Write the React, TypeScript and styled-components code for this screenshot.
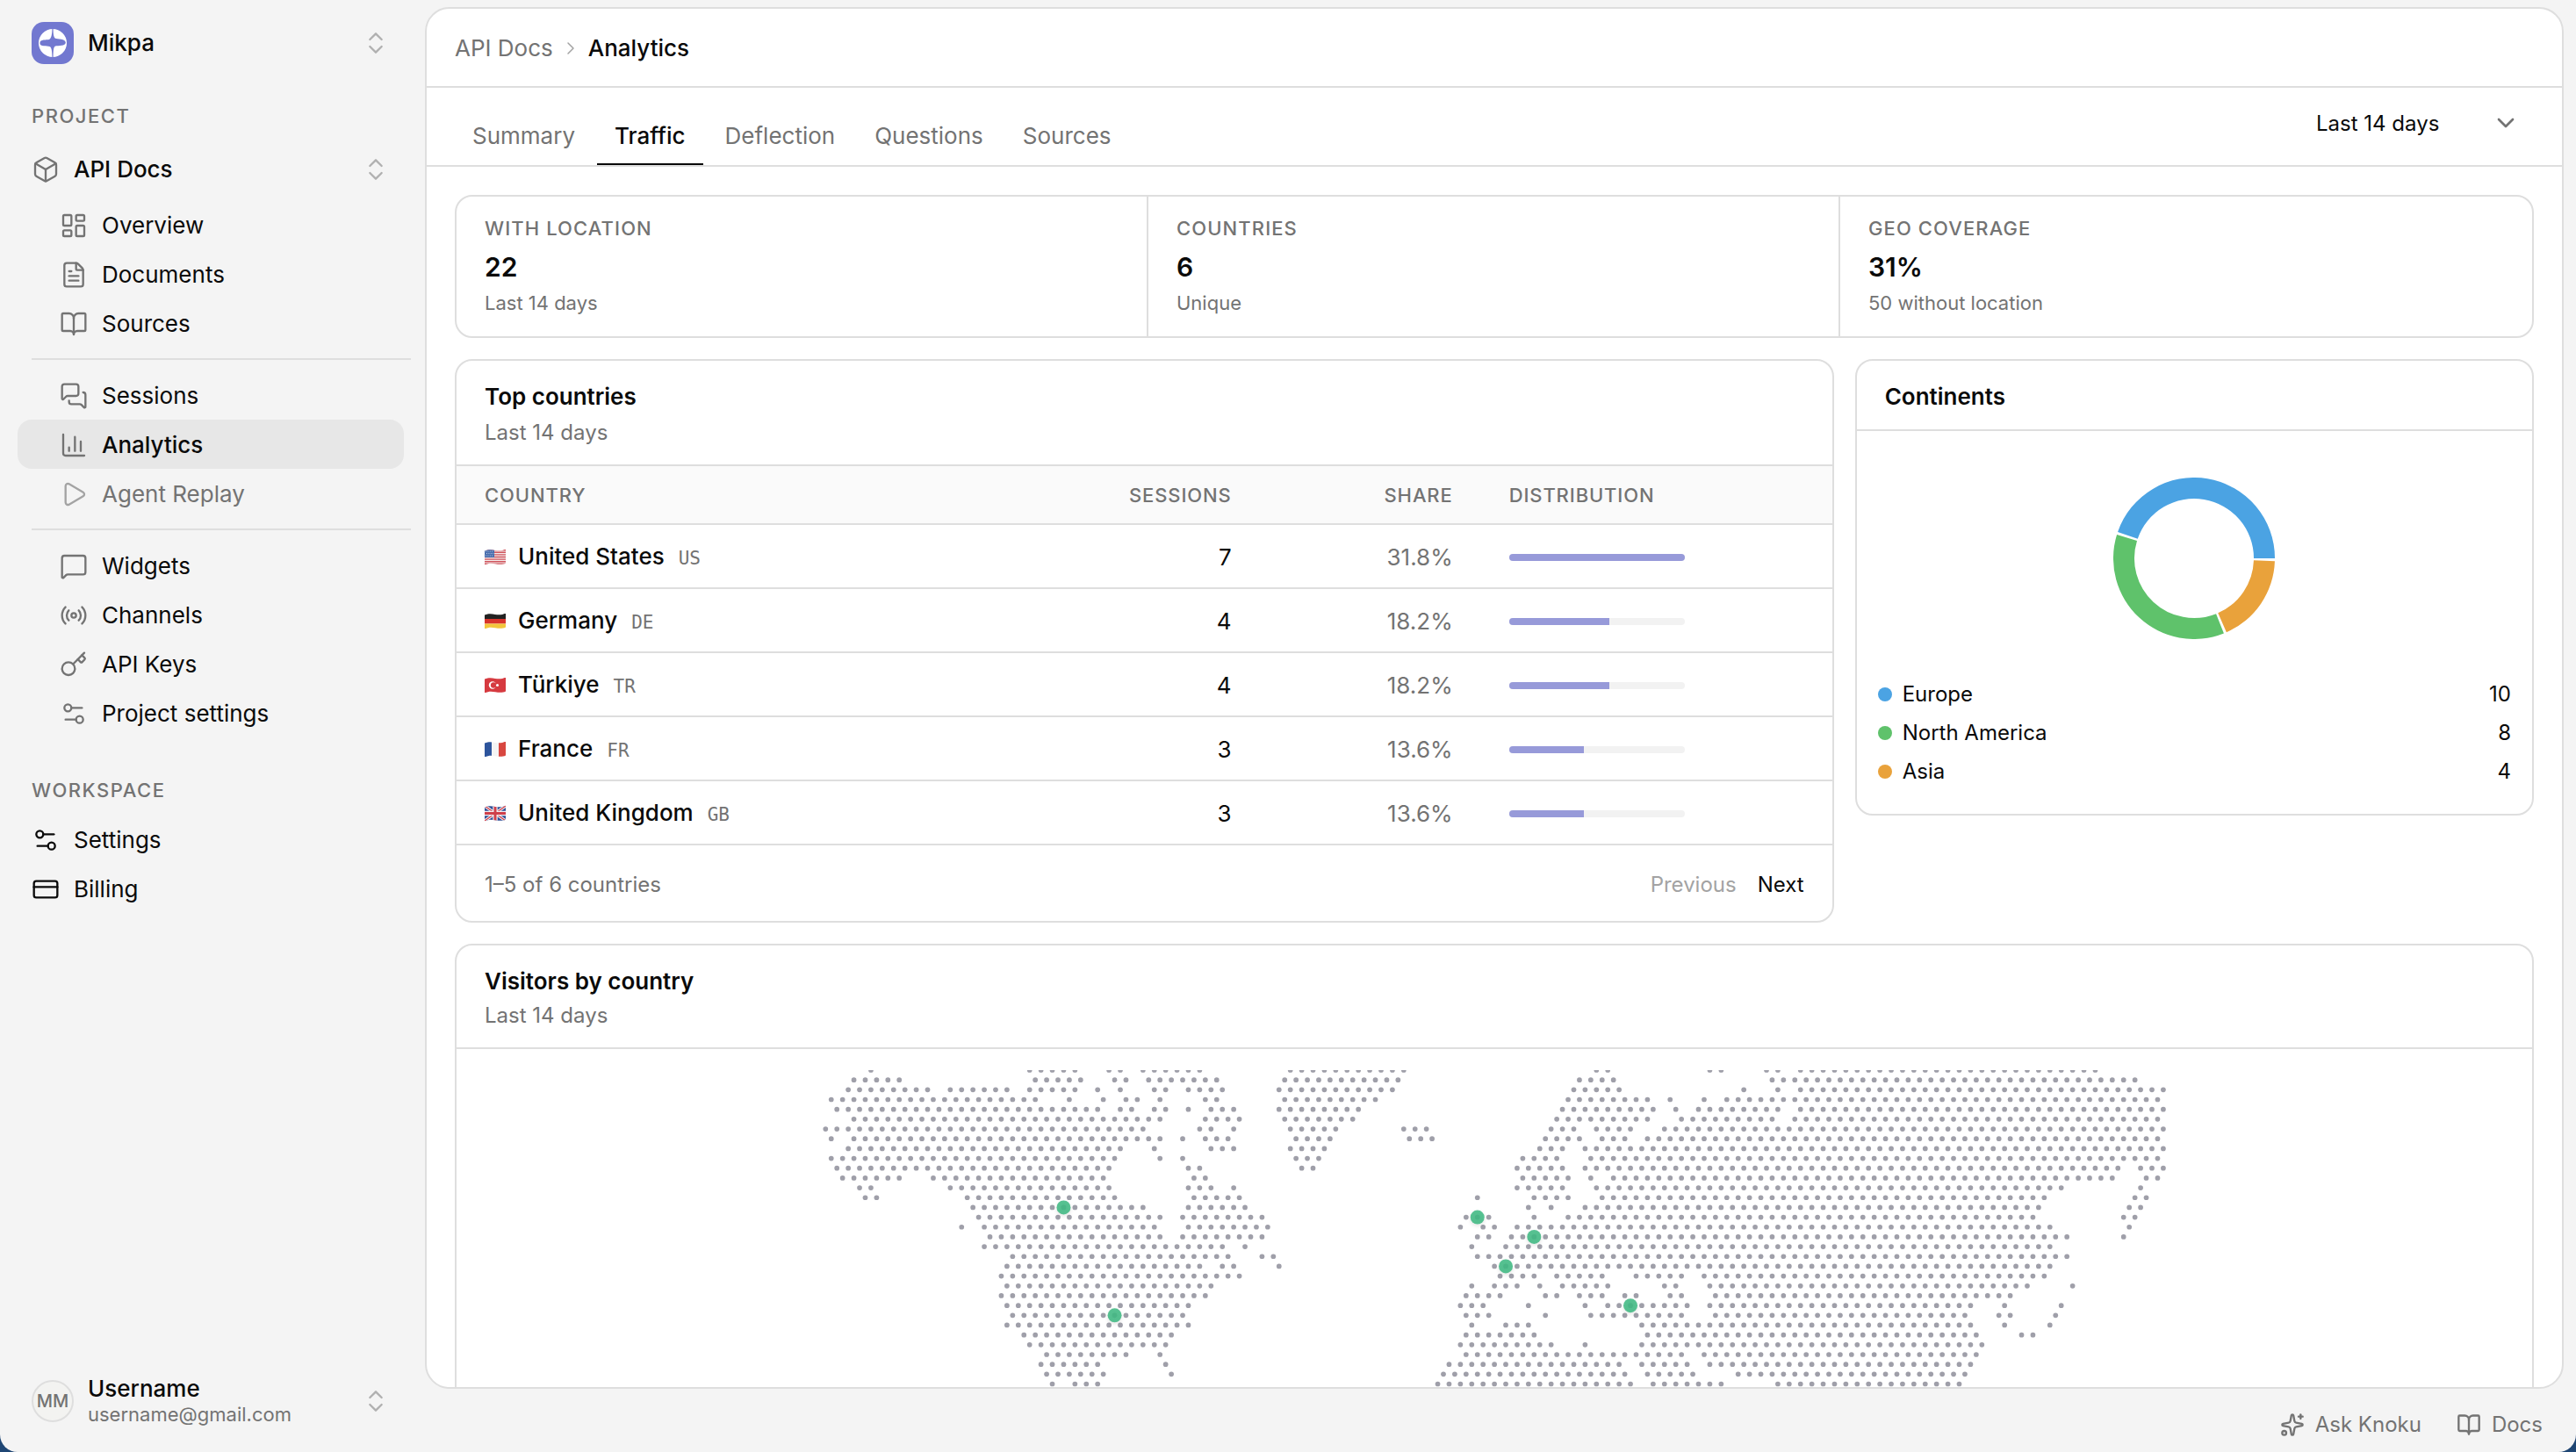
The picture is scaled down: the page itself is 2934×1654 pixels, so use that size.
import React from "react";
import styled, { createGlobalStyle, css } from "styled-components";
import {
  BookOpen,
  Box,
  ChartColumn,
  ChevronDown,
  ChevronRight,
  ChevronsUpDown,
  CreditCard,
  FileText,
  Key,
  LayoutDashboard,
  MessageSquare,
  MessagesSquare,
  Play,
  Radio,
  Settings2,
  Sparkles,
  type LucideIcon,
} from "lucide-react";

const color = {
  ink: "#0a0a0a",
  muted: "#737373",
  faint: "#a3a3a3",
  line: "#dedede",
  canvas: "#f4f4f4",
  surface: "#ffffff",
  subtle: "#fafafa",
  track: "#f2f2f2",
  active: "#e7e7e7",
  brand: "#7278d0",
  bar: "#979ad9",
  mapDot: "#9f9fa9",
  marker: "#40b983",
};

const GlobalStyle = createGlobalStyle`
  *, *::before, *::after { box-sizing: border-box; }
  body {
    margin: 0;
    background: #1f4674;
    color: ${color.ink};
    font-family: Inter, "Liberation Sans", sans-serif;
    font-size: 26px;
    line-height: 36px;
    -webkit-font-smoothing: antialiased;
  }
  button, select { font: inherit; color: inherit; }
  a { color: inherit; text-decoration: none; }
  h2, p, ul, dl, dd, dt { margin: 0; padding: 0; }
  ul { list-style: none; }
`;

/* ---------- shell ---------- */

const Shell = styled.div`
  display: grid;
  grid-template-columns: 484px minmax(0, 1fr);
  height: 100vh;
  overflow: hidden;
  background: ${color.canvas};
  border-radius: 0 0 20px 20px;
`;

const Sidebar = styled.aside`
  display: flex;
  flex-direction: column;
  padding: 20px 24px 28px 20px;
`;

const MainColumn = styled.div`
  display: flex;
  flex-direction: column;
  min-width: 0;
  min-height: 0;
  padding: 8px 14px 0 0;
`;

const Panel = styled.main`
  flex: 1;
  min-height: 0;
  display: flex;
  flex-direction: column;
  overflow: hidden;
  background: ${color.surface};
  border: 2px solid ${color.line};
  border-radius: 28px;
`;

/* ---------- sidebar ---------- */

const rowBase = css`
  display: flex;
  align-items: center;
  gap: 16px;
  width: 100%;
  height: 56px;
  padding: 2px 16px 0;
  border: 0;
  border-radius: 16px;
  background: transparent;
  text-align: left;
  cursor: pointer;
`;

const SwitcherButton = styled.button`
  ${rowBase}
  font-weight: 500;
  & > svg:first-child { color: ${color.muted}; }
  & > svg:last-child { margin-left: auto; color: #b0b0b0; }
`;

const UserButton = styled(SwitcherButton)`
  height: 60px;
  margin-top: auto;
  padding-top: 0;
`;

const LogoMark = styled.span`
  display: grid;
  place-items: center;
  width: 48px;
  height: 48px;
  border-radius: 14px;
  background: ${color.brand};
`;

const GroupLabel = styled.p<{ $spacious?: boolean }>`
  margin: ${(p) => (p.$spacious ? "44px 16px 12px" : "40px 16px 16px")};
  color: ${color.muted};
  font-size: 22px;
  font-weight: 500;
  line-height: 32px;
  letter-spacing: 0.07em;
  text-transform: uppercase;
`;

const NavList = styled.ul<{ $gap?: boolean }>`
  margin-top: ${(p) => (p.$gap ? "8px" : "0")};
`;

const NavLink = styled.a<{ $nested?: boolean; $active?: boolean; $dim?: boolean }>`
  ${rowBase}
  padding-left: ${(p) => (p.$nested ? "48px" : "16px")};
  color: ${(p) => (p.$dim ? color.muted : color.ink)};
  background: ${(p) => (p.$active ? color.active : "transparent")};
  font-weight: ${(p) => (p.$active ? 500 : 400)};
  & > svg {
    color: ${(p) => (p.$dim ? color.faint : p.$nested ? color.muted : color.ink)};
  }
`;

const NavDivider = styled.hr`
  height: 2px;
  margin: 12px -8px 12px 16px;
  border: 0;
  background: ${color.line};
`;

const Avatar = styled.span`
  display: grid;
  place-items: center;
  width: 48px;
  height: 48px;
  border: 2px solid ${color.line};
  border-radius: 50%;
  background: #f3f3f1;
  color: ${color.muted};
  font-size: 20px;
  font-weight: 500;
`;

const UserText = styled.span`
  display: flex;
  flex-direction: column;
  line-height: 30px;
`;

const UserEmail = styled.span`
  color: ${color.muted};
  font-size: 22px;
  font-weight: 400;
  line-height: 28px;
`;

/* ---------- panel header ---------- */

const Breadcrumbs = styled.nav`
  display: flex;
  align-items: center;
  gap: 8px;
  height: 90px;
  padding: 2px 32px 0;
  border-bottom: 2px solid ${color.line};
  & a { color: ${color.muted}; }
  & svg { color: ${color.faint}; }
  & span { font-weight: 500; }
`;

const TabBar = styled.div`
  display: flex;
  justify-content: space-between;
  height: 90px;
  padding: 0 32px;
  border-bottom: 2px solid ${color.line};
`;

const Tabs = styled.div`
  display: flex;
  align-items: flex-end;
  gap: 5px;
`;

const Tab = styled.button<{ $active?: boolean }>`
  height: 68px;
  padding: 4px 20px 0;
  border: 0;
  border-bottom: 2px solid ${(p) => (p.$active ? color.ink : "transparent")};
  background: transparent;
  color: ${(p) => (p.$active ? color.ink : color.muted)};
  font-weight: ${(p) => (p.$active ? 500 : 400)};
  cursor: pointer;
`;

const RangeField = styled.label`
  display: grid;
  align-items: center;
  width: 264px;
  height: 64px;
  margin-top: 8px;
  & > * { grid-area: 1 / 1; }
  & > svg {
    justify-self: end;
    margin-right: 16px;
    color: ${color.muted};
    pointer-events: none;
  }
`;

const RangeSelect = styled.select`
  appearance: none;
  width: 100%;
  height: 100%;
  padding: 2px 16px 0;
  border: 0;
  border-radius: 16px;
  background: transparent;
  font-size: 24px;
`;

const Content = styled.div`
  flex: 1;
  min-height: 0;
  overflow-y: auto;
  scrollbar-width: none;
  padding: 32px 32px 0;
`;

const CardGrid = styled.div`
  display: grid;
  grid-template-columns: repeat(12, minmax(0, 1fr));
  align-items: start;
  gap: 24px;
`;

const Card = styled.section<{ $span: number }>`
  grid-column: span ${(p) => p.$span};
  overflow: hidden;
  border: 2px solid ${color.line};
  border-radius: 20px;
  background: ${color.surface};
`;

/* ---------- stats ---------- */

const StatStrip = styled.dl`
  grid-column: span 12;
  display: grid;
  grid-template-columns: repeat(3, minmax(0, 1fr));
  border: 2px solid ${color.line};
  border-radius: 20px;
`;

const Stat = styled.div`
  padding: 20px 32px 22px;
  & + & { box-shadow: -2px 0 0 ${color.line}; }
`;

const StatLabel = styled.dt`
  color: ${color.muted};
  font-size: 22px;
  font-weight: 500;
  line-height: 32px;
  letter-spacing: 0.05em;
  text-transform: uppercase;
`;

const StatValue = styled.dd`
  margin: 5px 0 2px;
  font-size: 30px;
  font-weight: 600;
  line-height: 46px;
`;

const StatNote = styled.dd`
  color: ${color.muted};
  font-size: 22px;
  line-height: 32px;
`;

/* ---------- cards ---------- */

const CardHeader = styled.header<{ $gap?: number }>`
  display: flex;
  flex-direction: column;
  gap: ${(p) => p.$gap ?? 0}px;
  padding: 22px 32px 18px;
  border-bottom: 2px solid ${color.line};
`;

const CardTitle = styled.h2`
  font-size: 26px;
  font-weight: 600;
  line-height: 38px;
`;

const Caption = styled.p`
  color: ${color.muted};
  font-size: 24px;
  line-height: 36px;
`;

const CountryTable = styled.table`
  width: 100%;
  table-layout: fixed;
  border-collapse: separate;
  border-spacing: 0;
`;

const HeadCell = styled.th<{ $width?: number; $end?: boolean }>`
  width: ${(p) => (p.$width ? `${p.$width}px` : "auto")};
  height: 67px;
  padding: 0 32px;
  border-bottom: 2px solid ${color.line};
  background: ${color.subtle};
  color: ${color.muted};
  font-size: 22px;
  font-weight: 500;
  letter-spacing: 0.04em;
  text-align: ${(p) => (p.$end ? "right" : "left")};
  text-transform: uppercase;
`;

const Cell = styled.td<{ $end?: boolean; $muted?: boolean }>`
  height: 73px;
  padding: 2px 32px 0;
  border-bottom: 2px solid ${color.line};
  color: ${(p) => (p.$muted ? color.muted : color.ink)};
  text-align: ${(p) => (p.$end ? "right" : "left")};
`;

const CountryName = styled.div`
  display: flex;
  align-items: baseline;
  gap: 16px;
  font-weight: 500;
  & > svg {
    align-self: center;
    margin-right: -2px;
  }
`;

const CountryCode = styled.span`
  color: ${color.muted};
  font-family: "DejaVu Sans Mono", monospace;
  font-size: 21px;
  font-weight: 400;
`;

const Track = styled.div`
  width: 200px;
  height: 8px;
  overflow: hidden;
  border-radius: 4px;
  background: ${color.track};
`;

const Fill = styled.div`
  height: 100%;
  background: ${color.bar};
`;

const Pager = styled.footer`
  display: flex;
  align-items: center;
  gap: 24px;
  height: 86px;
  padding: 4px 32px 0;
  font-size: 24px;
  & > p { margin-right: auto; }
`;

const PagerButton = styled.button`
  padding: 0;
  border: 0;
  background: transparent;
  cursor: pointer;
  &:disabled { color: ${color.faint}; }
`;

const ContinentBody = styled.div`
  display: flex;
  flex-direction: column;
  gap: 16px;
  padding: 24px 24px 30px;
`;

const DonutFrame = styled.div`
  display: grid;
  place-items: center;
  height: 242px;
`;

const Legend = styled.ul`
  display: flex;
  flex-direction: column;
  gap: 8px;
  font-size: 24px;
`;

const LegendRow = styled.li`
  display: flex;
  align-items: center;
  gap: 12px;
`;

const Swatch = styled.span<{ $color: string }>`
  width: 16px;
  height: 16px;
  border-radius: 50%;
  background: ${(p) => p.$color};
`;

const LegendValue = styled.span`
  margin-left: auto;
`;

const MapFrame = styled.div`
  display: flex;
  justify-content: center;
  padding: 24px 32px;
  & > svg { flex: none; }
`;

const FooterBar = styled.footer`
  display: flex;
  align-items: center;
  justify-content: flex-end;
  gap: 40px;
  height: 72px;
  padding: 10px 24px 0 0;
`;

const FooterButton = styled.button`
  display: flex;
  align-items: center;
  gap: 12px;
  padding: 0;
  border: 0;
  background: transparent;
  color: ${color.muted};
  font-size: 24px;
  cursor: pointer;
`;

/* ---------- data ---------- */

type NavEntry = { label: string; icon: LucideIcon; active?: boolean; dim?: boolean };

const projectNav: NavEntry[][] = [
  [
    { label: "Overview", icon: LayoutDashboard },
    { label: "Documents", icon: FileText },
    { label: "Sources", icon: BookOpen },
  ],
  [
    { label: "Sessions", icon: MessagesSquare },
    { label: "Analytics", icon: ChartColumn, active: true },
    { label: "Agent Replay", icon: Play, dim: true },
  ],
  [
    { label: "Widgets", icon: MessageSquare },
    { label: "Channels", icon: Radio },
    { label: "API Keys", icon: Key },
    { label: "Project settings", icon: Settings2 },
  ],
];

const workspaceNav: NavEntry[] = [
  { label: "Settings", icon: Settings2 },
  { label: "Billing", icon: CreditCard },
];

const tabs = ["Summary", "Traffic", "Deflection", "Questions", "Sources"];

const stats = [
  { label: "With location", value: "22", note: "Last 14 days" },
  { label: "Countries", value: "6", note: "Unique" },
  { label: "Geo coverage", value: "31%", note: "50 without location" },
];

const countries = [
  { name: "United States", code: "US", sessions: 7, share: "31.8%" },
  { name: "Germany", code: "DE", sessions: 4, share: "18.2%" },
  { name: "Türkiye", code: "TR", sessions: 4, share: "18.2%" },
  { name: "France", code: "FR", sessions: 3, share: "13.6%" },
  { name: "United Kingdom", code: "GB", sessions: 3, share: "13.6%" },
];

const continents = [
  { name: "Europe", value: 10, color: "#4ba3e3" },
  { name: "North America", value: 8, color: "#5fc26b" },
  { name: "Asia", value: 4, color: "#e9a23b" },
];

/* Land dots of the map: one string per row, each item a column or a run of columns. */
const landRows = [
  "4 18-22 25-26 28-33 41-51 68-69 78-79 83-84 86-112",
  "2-6 18-22 25-26 28-34 40-50 66-69 83-115",
  "2-9 11-16 18-22 24 26 29-30 32-35 40-50 66-70 81 84 86-118",
  "0-18 21 24 26-27 29 33-34 40-48 65-72 74 77 79-117",
  "1-24 26-27 29-30 32 34-36 40-47 65-73 75 77-84 86-118",
  "2-29 33-36 40-46 64-72 75-83 85-117",
  "0-28 33-34 36 41-45 51-53 64-66 68-71 74-118",
  "0 2-29 31 33-35 41-44 51-53 63-66 68-70 72-117",
  "2-26 29 34-36 41-44 63-65 67-118",
  "0-25 29 31 41-43 61-64 67-117",
  "1-25 32-33 42-43 61-65 67-114 116-118",
  "1-6 9-24 32-33 61-65 67 69-113 116-117",
  "3-4 11-25 32-34 36 61-65 68-109 116",
  "3-4 12-25 32-36 57 62-65 68-107 115-116",
  "13-28 32-37 62 64 67-107 115-116",
  "13-29 31-38 56-58 62 65-106 114-115",
  "12 14-29 32-39 56 58-59 61-108 115",
  "14-29 31-38 57-58 60-109 114",
  "14-35 37 57 60-108",
  "16-35 38-39 57-109",
  "16-33 35-36 40 59-108",
  "15-36 59-62 64-68 71-75 77-107",
  "16-34 57 59-61 63 65-69 74-75 78-106 110",
  "15-33 56-59 63-64 66-68 70-71 74-75 78-104",
  "16-32 56-58 62 67 69-76 78-101 104 109",
  "16-31 56-58 63 67-75 78-100 103-104 108",
  "16-32 57 60-62 72-101 104 108",
  "17-30 56-62 72-101 105-106",
  "18-30 56-64 67 72-102",
  "19-26 29 56-75 77-101",
  "19-24 30 55-70 72-76 78-101",
  "19-24 30 54-70 72-76 80-100",
  "20 22-24 54-71 73-79 84-100",
];

const markers = [
  { row: 14, col: 21 },
  { row: 25, col: 25 },
  { row: 15, col: 57 },
  { row: 17, col: 62 },
  { row: 20, col: 60 },
  { row: 24, col: 71 },
];

/* ---------- drawings ---------- */

const dotX = (row: number, col: number) => 6.3 + col * 12.912 + (row % 2 ? 6.456 : 0);
const dotY = (row: number) => row * 11.172;

const expand = (spec: string) =>
  spec.split(" ").flatMap((run) => {
    const [from, to = from] = run.split("-").map(Number);
    return Array.from({ length: to - from + 1 }, (_, i) => from + i);
  });

function DottedMap() {
  return (
    <svg width="1536" height="520" viewBox="0 0 1536 520" role="img" aria-label="Visitors by country">
      <g fill={color.mapDot}>
        {landRows.map((spec, row) =>
          expand(spec).map((col) => (
            <circle key={`${row}-${col}`} cx={dotX(row, col)} cy={dotY(row)} r="2.85" />
          )),
        )}
      </g>
      <g fill={color.marker} fillOpacity="0.88" style={{ filter: "drop-shadow(0 2px 2px rgba(0,0,0,.12))" }}>
        {markers.map((m) => (
          <circle key={`${m.row}-${m.col}`} cx={dotX(m.row, m.col)} cy={dotY(m.row)} r="8" />
        ))}
      </g>
    </svg>
  );
}

const polar = (radius: number, degrees: number) => {
  const a = (degrees * Math.PI) / 180;
  return `${(radius * Math.cos(a)).toFixed(2)} ${(-radius * Math.sin(a)).toFixed(2)}`;
};

function Donut() {
  const gap = 2;
  const outer = 92;
  const inner = 68;
  const total = continents.reduce((sum, c) => sum + c.value, 0);
  let start = 0;
  return (
    <svg width="184" height="184" viewBox="-92 -92 184 184" role="img" aria-label="Continents">
      {continents.map((c) => {
        const from = start;
        const to = from + ((360 - gap * continents.length) * c.value) / total;
        start = to + gap;
        return (
          <path
            key={c.name}
            fill={c.color}
            d={`M${polar(outer, from)}A${outer} ${outer} 0 0 0 ${polar(outer, to)}L${polar(inner, to)}A${inner} ${inner} 0 0 1 ${polar(inner, from)}Z`}
          />
        );
      })}
    </svg>
  );
}

const flagArt: Record<string, React.ReactNode> = {
  US: (
    <>
      <path fill="#f5eeee" d="M0 0h24v17H0z" />
      <path stroke="#d0545c" strokeWidth="1.4" d="M0 .7h24M0 3.3h24M0 5.9h24M0 8.5h24M0 11.1h24M0 13.7h24M0 16.3h24" />
      <path fill="#4a6fae" d="M0 0h11v9H0z" />
      <path stroke="#b9c8e2" strokeDasharray="1 1.4" d="M1 2h9M2 4.5h8M1 7h9" />
    </>
  ),
  DE: (
    <>
      <path fill="#222" d="M0 0h24v6H0z" />
      <path fill="#d8342b" d="M0 6h24v5.500H0z" />
      <path fill="#f3c63c" d="M0 11.500h24V17H0z" />
    </>
  ),
  TR: (
    <>
      <path fill="#d63a40" d="M0 0h24v17H0z" />
      <circle cx="9" cy="8.500" r="4.200" fill="#fff" />
      <circle cx="10.200" cy="8.500" r="3.300" fill="#d63a40" />
      <circle cx="14.500" cy="8.500" r="1.500" fill="#fff" />
    </>
  ),
  FR: (
    <>
      <path fill="#2d549c" d="M0 0h8v17H0z" />
      <path fill="#f4f4f4" d="M8 0h8v17H8z" />
      <path fill="#d84740" d="M16 0h8v17h-8z" />
    </>
  ),
  GB: (
    <>
      <path fill="#2f4f96" d="M0 0h24v17H0z" />
      <path stroke="#f1eef2" strokeWidth="3.400" d="m0 0 24 17M24 0 0 17" />
      <path stroke="#cf3f4a" strokeWidth="1.300" d="m0 0 24 17M24 0 0 17" />
      <path stroke="#f1eef2" strokeWidth="5.400" d="M12 0v17M0 8.500h24" />
      <path stroke="#cf3f4a" strokeWidth="3" d="M12 0v17M0 8.500h24" />
    </>
  ),
};

function Flag({ code }: { code: string }) {
  const clip = `flag-${code}`;
  return (
    <svg width="24" height="19" viewBox="0 -1 24 19" aria-hidden="true">
      <clipPath id={clip}>
        <path d="M0 1.500C5-.5 8 .2 12 .9S20 1.500 24-.5V15.500c-4 2-8 1.300-12 .7S5 15 0 17.500Z" />
      </clipPath>
      <g clipPath={`url(#${clip})`}>{flagArt[code]}</g>
    </svg>
  );
}

function Logo() {
  return (
    <LogoMark>
      <svg width="32" height="32" viewBox="0 0 32 32" aria-hidden="true">
        <circle cx="16" cy="16" r="16" fill="#fff" />
        <path
          fill={color.brand}
          d="M15.400 0h1.200c0 5 .3 9.500 2.400 10.700 2.500.9 11.800.3 11.800 4.900 0 4.200-8.300 3.300-11.800 3.900-2 .8-2.300 5-2.400 12.500h-1.200c-.1-7-.6-11.200-2.800-12.100-3-.9-11.200.5-11.200-3.700 0-5 7.800-3.300 10.400-4.200 2.800-1.200 3.500-6 3.600-12Z"
        />
      </svg>
    </LogoMark>
  );
}

/* ---------- sections ---------- */

const iconProps = { size: 32, strokeWidth: 1.75, "aria-hidden": true } as const;

function NavItems({ items, nested, gap }: { items: NavEntry[]; nested?: boolean; gap?: boolean }) {
  return (
    <NavList $gap={gap}>
      {items.map(({ label, icon: Icon, active, dim }) => (
        <li key={label}>
          <NavLink href="#" $nested={nested} $active={active} $dim={dim} aria-current={active ? "page" : undefined}>
            <Icon {...iconProps} />
            {label}
          </NavLink>
        </li>
      ))}
    </NavList>
  );
}

function SideNavigation() {
  return (
    <Sidebar>
      <SwitcherButton type="button">
        <Logo />
        Mikpa
        <ChevronsUpDown {...iconProps} />
      </SwitcherButton>
      <nav>
        <GroupLabel>Project</GroupLabel>
        <SwitcherButton type="button">
          <Box {...iconProps} />
          API Docs
          <ChevronsUpDown {...iconProps} />
        </SwitcherButton>
        {projectNav.map((items, i) => (
          <React.Fragment key={items[0].label}>
            {i > 0 && <NavDivider />}
            <NavItems items={items} nested gap={i === 0} />
          </React.Fragment>
        ))}
        <GroupLabel $spacious>Workspace</GroupLabel>
        <NavItems items={workspaceNav} />
      </nav>
      <UserButton type="button">
        <Avatar>MM</Avatar>
        <UserText>
          Username
          <UserEmail>username@gmail.com</UserEmail>
        </UserText>
        <ChevronsUpDown {...iconProps} />
      </UserButton>
    </Sidebar>
  );
}

function TopCountries() {
  const max = Math.max(...countries.map((c) => c.sessions));
  return (
    <Card $span={8}>
      <CardHeader $gap={4}>
        <CardTitle>Top countries</CardTitle>
        <Caption>Last 14 days</Caption>
      </CardHeader>
      <CountryTable>
        <thead>
          <tr>
            <HeadCell>Country</HeadCell>
            <HeadCell $width={252} $end>Sessions</HeadCell>
            <HeadCell $width={252} $end>Share</HeadCell>
            <HeadCell $width={400}>Distribution</HeadCell>
          </tr>
        </thead>
        <tbody>
          {countries.map((c) => (
            <tr key={c.code}>
              <Cell>
                <CountryName>
                  <Flag code={c.code} />
                  {c.name}
                  <CountryCode>{c.code}</CountryCode>
                </CountryName>
              </Cell>
              <Cell $end>{c.sessions}</Cell>
              <Cell $end $muted>{c.share}</Cell>
              <Cell>
                <Track>
                  <Fill style={{ width: `${(c.sessions / max) * 100}%` }} />
                </Track>
              </Cell>
            </tr>
          ))}
        </tbody>
      </CountryTable>
      <Pager>
        <Caption>1–5 of 6 countries</Caption>
        <PagerButton type="button" disabled>Previous</PagerButton>
        <PagerButton type="button">Next</PagerButton>
      </Pager>
    </Card>
  );
}

function Continents() {
  return (
    <Card $span={4}>
      <CardHeader>
        <CardTitle>Continents</CardTitle>
      </CardHeader>
      <ContinentBody>
        <DonutFrame>
          <Donut />
        </DonutFrame>
        <Legend>
          {continents.map((c) => (
            <LegendRow key={c.name}>
              <Swatch $color={c.color} />
              {c.name}
              <LegendValue>{c.value}</LegendValue>
            </LegendRow>
          ))}
        </Legend>
      </ContinentBody>
    </Card>
  );
}

export default function App() {
  return (
    <>
      <GlobalStyle />
      <Shell>
        <SideNavigation />
        <MainColumn>
          <Panel>
            <Breadcrumbs aria-label="Breadcrumb">
              <a href="#">API Docs</a>
              <ChevronRight size={24} strokeWidth={1.5} aria-hidden />
              <span>Analytics</span>
            </Breadcrumbs>
            <TabBar>
              <Tabs role="tablist">
                {tabs.map((t) => (
                  <Tab key={t} type="button" role="tab" aria-selected={t === "Traffic"} $active={t === "Traffic"}>
                    {t}
                  </Tab>
                ))}
              </Tabs>
              <RangeField>
                <RangeSelect aria-label="Date range" defaultValue="14">
                  <option value="14">Last 14 days</option>
                </RangeSelect>
                <ChevronDown {...iconProps} strokeWidth={2} />
              </RangeField>
            </TabBar>
            <Content>
              <CardGrid>
                <StatStrip>
                  {stats.map((s) => (
                    <Stat key={s.label}>
                      <StatLabel>{s.label}</StatLabel>
                      <StatValue>{s.value}</StatValue>
                      <StatNote>{s.note}</StatNote>
                    </Stat>
                  ))}
                </StatStrip>
                <TopCountries />
                <Continents />
                <Card $span={12}>
                  <CardHeader $gap={2}>
                    <CardTitle>Visitors by country</CardTitle>
                    <Caption>Last 14 days</Caption>
                  </CardHeader>
                  <MapFrame>
                    <DottedMap />
                  </MapFrame>
                </Card>
              </CardGrid>
            </Content>
          </Panel>
          <FooterBar>
            <FooterButton type="button">
              <Sparkles size={28} strokeWidth={2} aria-hidden />
              Ask Knoku
            </FooterButton>
            <FooterButton type="button">
              <BookOpen size={28} strokeWidth={2} aria-hidden />
              Docs
            </FooterButton>
          </FooterBar>
        </MainColumn>
      </Shell>
    </>
  );
}
